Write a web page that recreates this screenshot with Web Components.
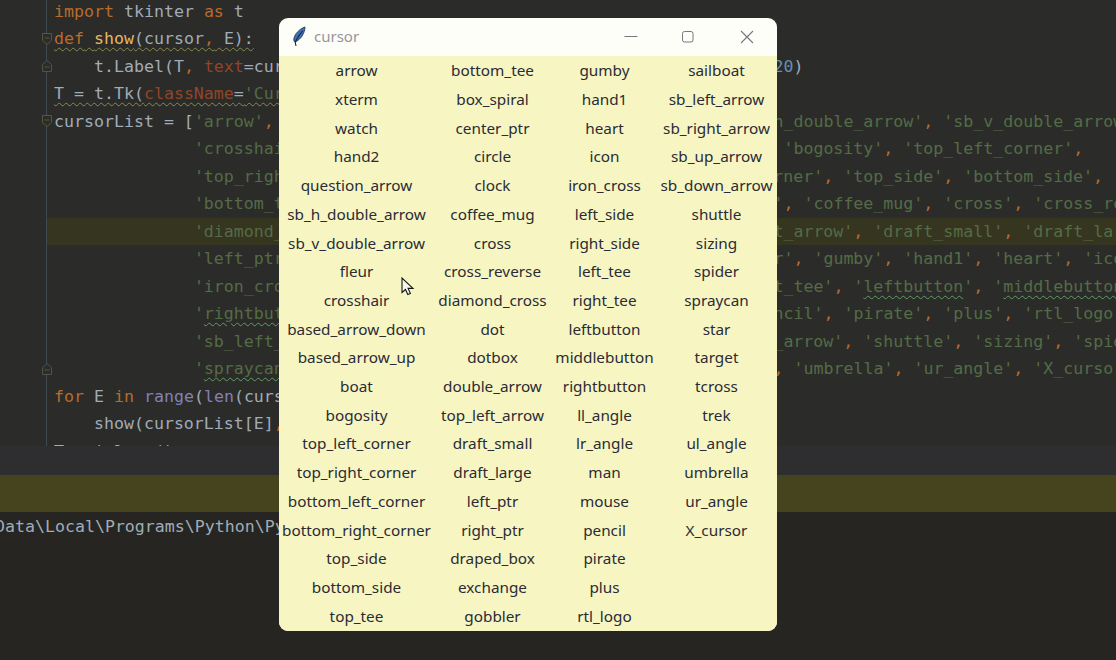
<!DOCTYPE html>
<html><head><meta charset="utf-8">
<style>
html,body{margin:0;height:100%;background:#2b2b2a}
body{width:1116px;height:660px;overflow:hidden;position:relative}
</style></head><body>
<ide-app>
  <code-editor></code-editor>
  <tool-strip></tool-strip>
  <run-console>Data\Local\Programs\Python\Python39\python.exe</run-console>
</ide-app>
<tk-window title="cursor"></tk-window>
<mouse-pointer></mouse-pointer>
<script>
const shade=(html,css)=>`<style>${css}</style>${html}`;

class IdeApp extends HTMLElement{constructor(){super();this.attachShadow({mode:'open'}).innerHTML=shade('<slot></slot>',
`:host{display:flex;flex-direction:column;width:1116px;height:660px;background:#2b2b2a}`);}}

const K=s=>`<i class="k">${s}</i>`,S=s=>`<i class="s">${s}</i>`,C='<i class="k">,</i>',
 P=s=>`<i class="p">${s}</i>`,B=s=>`<i class="b">${s}</i>`,F=s=>`<i class="f">${s}</i>`,N=s=>`<i class="n">${s}</i>`;
const list=(...a)=>' '.repeat(14)+a.map(x=>{
  if(x[0]==='~')return `<i class="s">'</i><i class="s wg">${x.slice(1)}</i><i class="s">'</i>`+C;
  return S(`'${x}'`)+C;}).join(' ');
const LINES=[
 {h:K('import')+' tkinter '+K('as')+' t'},
 {h:`<i class="wy">${K('def')} ${F('show')}(cursor${C} E):</i>`,m:'down'},
 {h:`    t.Label(T${C} ${P('text')}=cursor${C} ${P('cursor')}=cursor).grid(${P('row')}=E % ${N('20')}${C} ${P('column')}=E // ${N('20')})`,m:'up'},
 {h:`<i class="wy">T = t.Tk(${P('className')}=${S("'Cursor'")})</i>`},
 {h:`cursorList = [`+list('arrow','xterm','watch','hand2','question_arrow','sb_h_double_arrow','sb_v_double_arrow').trimStart(),m:'down'},
 {h:list('crosshair','based_arrow_down','based_arrow_up','boat','bogosity','top_left_corner')},
 {h:list('top_right_corner','bottom_left_corner','bottom_right_corner','top_side','bottom_side')},
 {h:list('bottom_tee','box_spiral','center_ptr','circle','clock','coffee_mug','cross','cross_reverse')},
 {h:list('diamond_cross','dot','dotbox','double_arrow','top_left_arrow','draft_small','draft_large'),hl:1},
 {h:list('left_ptr','right_ptr','draped_box','exchange','gobbler','gumby','hand1','heart','icon')},
 {h:list('iron_cross','left_side','right_side','left_tee','right_tee','~leftbutton','~middlebutton')},
 {h:list('~rightbutton','ll_angle','lr_angle','man','mouse','pencil','pirate','plus','rtl_logo')},
 {h:list('sb_left_arrow','sb_right_arrow','sb_up_arrow','sb_down_arrow','shuttle','sizing','spider')},
 {h:list('~spraycan','star','target','tcross','trek','ul_angle','umbrella','ur_angle','X_cursor').replace(/<i class="k">,<\/i>$/,'')+']',m:'up'},
 {h:K('for')+' E '+K('in')+' '+B('range')+'('+B('len')+'(cursorList)):'},
 {h:`    show(cursorList[E]${C} E)`},
 {h:'T.mainloop()'}
];
const MARK={
 down:'<svg class="m" width="12" height="14" viewBox="0 0 12 14"><path d="M1.500 1.500h9v7l-4.500 4-4.500-4z" fill="#2c2c28" stroke="#57573f"/><path d="M3.500 6h5" stroke="#57573f"/></svg>',
 up:'<svg class="m" width="12" height="14" viewBox="0 0 12 14"><path d="M1.500 12.500h9v-7l-4.500-4-4.500 4z" fill="#2c2c28" stroke="#50514c"/><path d="M3.500 8h5" stroke="#50514c"/></svg>'};
class CodeEditor extends HTMLElement{constructor(){super();
 const rows=LINES.map(l=>`<div class="row ${l.hl?'hl':''}"><div class="g">${l.m?MARK[l.m]:''}</div><pre>${l.h}</pre></div>`).join('');
 this.attachShadow({mode:'open'}).innerHTML=shade(`<div class="inner">${rows}</div>`,
`:host{display:block;height:446px;overflow:hidden;flex:none;background:#2b2b2a}
.inner{margin-top:-2.500px}
.row{display:flex;height:27.500px;line-height:27.500px}
.g{width:46px;flex:none;border-right:1px solid #3f4a55;display:flex;align-items:center}
.m{flex:none;margin-left:41px;margin-right:-7px;position:relative;z-index:1}
pre{margin:0;padding-left:7px;font:16.600px/27.500px "DejaVu Sans Mono",monospace;color:#a0acb7;white-space:pre;flex:1;min-width:0}
.hl pre{background:#353520}
i{font-style:normal}
.k{color:#b86c2b}.s{color:#546c45}.p{color:#924526}.b{color:#8181b8}.f{color:#e6b860}.n{color:#6590b5}
.wy{text-decoration:underline wavy #8a8a50 1px;text-underline-offset:3px}
.wg{text-decoration:underline wavy #5f9d62 1px;text-underline-offset:3px}`);}}

class ToolStrip extends HTMLElement{constructor(){super();this.attachShadow({mode:'open'}).innerHTML=shade('<div class="tabs"></div><div class="run"></div>',
`:host{display:block;flex:none}
.tabs{height:29px;background:#2e2e30}
.run{height:37px;background:#45441f}`);}}

class RunConsole extends HTMLElement{constructor(){super();this.attachShadow({mode:'open'}).innerHTML=shade('<div><slot></slot></div>',
`:host{display:block;flex:1;overflow:hidden;background:#262522}
div{margin-left:-5px;padding-top:1px;font:16.600px/27.500px "DejaVu Sans Mono",monospace;color:#a0acb7;white-space:pre}`);}}

const NAMES=`arrow xterm watch hand2 question_arrow sb_h_double_arrow sb_v_double_arrow fleur crosshair based_arrow_down based_arrow_up boat bogosity top_left_corner top_right_corner bottom_left_corner bottom_right_corner top_side bottom_side top_tee bottom_tee box_spiral center_ptr circle clock coffee_mug cross cross_reverse diamond_cross dot dotbox double_arrow top_left_arrow draft_small draft_large left_ptr right_ptr draped_box exchange gobbler gumby hand1 heart icon iron_cross left_side right_side left_tee right_tee leftbutton middlebutton rightbutton ll_angle lr_angle man mouse pencil pirate plus rtl_logo sailboat sb_left_arrow sb_right_arrow sb_up_arrow sb_down_arrow shuttle sizing spider spraycan star target tcross trek ul_angle umbrella ur_angle X_cursor`.split(' ');

class TkLabel extends HTMLElement{constructor(){super();this.attachShadow({mode:'open'}).innerHTML=shade('<slot></slot>',
`:host{display:flex;align-items:center;justify-content:center;white-space:nowrap;font:15.300px "Noto Sans",sans-serif;color:#2b2b36}`);}}

class TkWindow extends HTMLElement{constructor(){super();
 const labels=NAMES.map(n=>`<tk-label>${n}</tk-label>`).join('');
 this.attachShadow({mode:'open'}).innerHTML=shade(`
<header>
 <svg class="feather" width="16" height="22" viewBox="0 0 16 22">
  <path d="M14 1C9 2.500 3.500 8 2.800 13c-.1 1.500.3 2.600 1.200 3C9.500 14 14 7 14 1z" fill="#3f70b4" stroke="#1d2c4a" stroke-width=".8"/>
  <path d="M11.500 5C9 8 6.500 11.500 4.200 16L5 20" fill="none" stroke="#14213a" stroke-width="1.100"/>
 </svg>
 <span class="t">${this.getAttribute('title')}</span>
 <div class="btns">
  <div><svg width="14" height="14"><path d="M0.500 6.500h13" stroke="#77787f"/></svg></div>
  <div><svg width="14" height="14" style="transform:translateX(-1px)"><rect x="1.500" y="1.500" width="10.500" height="10.500" rx="2" fill="none" stroke="#77787f"/></svg></div>
  <div><svg width="14" height="14"><path d="M1 1l12 12M13 1L1 13" stroke="#77787f" stroke-width="1.100"/></svg></div>
 </div>
</header>
<main>${labels}</main>`,
`:host{display:flex;flex-direction:column;position:absolute;left:279px;top:18px;width:498px;height:613px;border-radius:9px;overflow:hidden;background:#fefef8}
header{height:38px;flex:none;display:flex;align-items:center;padding-left:12px;padding-right:1px}
.feather{flex:none;margin-top:-1px}
.t{margin-left:7px;margin-top:-2px;font:15px "Noto Sans",sans-serif;color:#96969e}
.btns{margin-left:auto;display:flex}
.btns div{width:58px;height:38px;display:flex;align-items:center;justify-content:center}
main{flex:1;display:grid;grid-auto-flow:column;grid-template-rows:repeat(20,1fr);grid-template-columns:155px 117px 107px 117px;padding-bottom:1px;background:#f7f6c2}`);}}

class MousePointer extends HTMLElement{constructor(){super();this.attachShadow({mode:'open'}).innerHTML=shade(
`<svg width="15" height="21" viewBox="0 0 15 21"><path d="M1 1v14.500l3.500-3 2.300 5 2.600-1.100-2.300-5h4.900z" fill="#f8f8e8" stroke="#15151c" stroke-width="1.100" stroke-linejoin="miter"/></svg>`,
`:host{position:absolute;left:401px;top:277px;display:block;width:15px;height:21px}svg{display:block}`);}}

customElements.define('ide-app',IdeApp);
customElements.define('code-editor',CodeEditor);
customElements.define('tool-strip',ToolStrip);
customElements.define('run-console',RunConsole);
customElements.define('tk-label',TkLabel);
customElements.define('tk-window',TkWindow);
customElements.define('mouse-pointer',MousePointer);
</script>
</body></html>
